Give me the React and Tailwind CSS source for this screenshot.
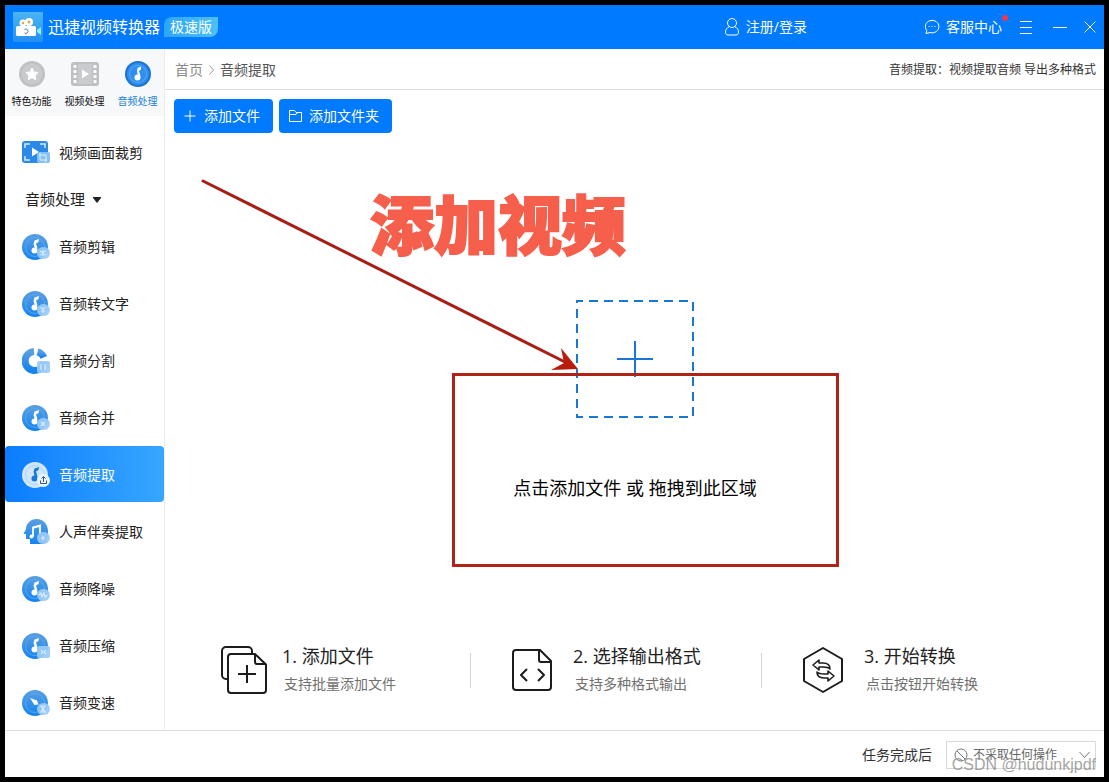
const TABS = [
  { id: 'special', label: '特色功能' },
  { id: 'video', label: '视频处理' },
  { id: 'audio', label: '音频处理' }
];

const AUDIO_TOOLS = [
  { id: 'cut', label: '音频剪辑' },
  { id: 'text', label: '音频转文字' },
  { id: 'split', label: '音频分割' },
  { id: 'merge', label: '音频合并' },
  { id: 'extract', label: '音频提取' },
  { id: 'vocal', label: '人声伴奏提取' },
  { id: 'denoise', label: '音频降噪' },
  { id: 'compress', label: '音频压缩' },
  { id: 'speed', label: '音频变速' }
];

const STEPS = [
  { id: 'add', title: '1. 添加文件', hint: '支持批量添加文件' },
  { id: 'format', title: '2. 选择输出格式', hint: '支持多种格式输出' },
  { id: 'convert', title: '3. 开始转换', hint: '点击按钮开始转换' }
];

// what sits inside the small badge of each tool icon, on a 28x28 grid
const BADGES = {
  cut: <path d="M18 18l6 4M18 22l6-4M21 17v6" />,
  text: <path d="M18 18h6M21 18v5M19 21h4" />,
  split: <path d="M19 17v6M23 17v6M18 20h1M23 20h1" />,
  merge: <path d="M19 18l4 4M23 18l-4 4" />,
  vocal: <path d="M19 20h4M21 18v4" />,
  denoise: <path d="M17 20l2-2 1 4 2-4 1 4 2-2" />,
  compress: <path d="M19 18l2 2-2 2M24 18l-2 2 2 2" />,
  speed: <path d="M19 17h4l-4 6h4z" />
};

function LogoIcon() {
  return (
    <svg width="30" height="30" viewBox="0 0 30 30" aria-hidden="true">
      <defs>
        <linearGradient id="logo" x1="0" y1="0" x2="0" y2="1">
          <stop offset="0" stopColor="#4bb5f5" />
          <stop offset="1" stopColor="#2490ef" />
        </linearGradient>
      </defs>
      <rect width="30" height="30" fill="url(#logo)" />
      <circle cx="10" cy="11" r="3.5" fill="#fff" />
      <circle cx="16" cy="10" r="4" fill="#fff" />
      <circle cx="10" cy="11" r="1.2" fill="#e0a83c" />
      <circle cx="16" cy="10" r="1.5" fill="#e0a83c" />
      <rect x="3" y="14" width="20" height="10" rx="1.5" fill="#fff" />
      <path d="M24 18l4-3v8l-4-3z" fill="#8ff0f5" />
      <path d="M11.500 17.500a2.200 2.200 0 1 1 0 3.500" fill="none" stroke="#3a7fc0" />
    </svg>
  );
}

function Note({ color }) {
  return (
    <g fill={color}>
      <circle cx="12.500" cy="17.500" r="3" />
      <path d="M13.500 17.500l-2-6.500 1-3.500 4.500-1.500-.5 3-2.500 1.500 1.500 5z" />
    </g>
  );
}

function TabIcon({ id }) {
  if (id === 'special') {
    return (
      <svg width="26" height="26" viewBox="0 0 26 26" aria-hidden="true">
        <circle cx="13" cy="13" r="13" fill="#bfc0c4" />
        <circle cx="13" cy="13" r="10.500" fill="#c9cacd" />
        <path
          d="M13 7l1.900 3.900 4.200.6-3.100 3 .8 4.200-3.800-2-3.800 2 .8-4.200-3.100-3 4.200-.6z"
          fill="#fff"
          stroke="#fff"
          strokeLinejoin="round"
        />
      </svg>
    );
  }
  if (id === 'video') {
    return (
      <svg width="28" height="26" viewBox="0 0 28 26" aria-hidden="true">
        <rect y="1" width="28" height="24" rx="3" fill="#bfc0c4" />
        <rect x="7" y="3" width="14" height="20" fill="#cacbce" />
        <g fill="#fff">
          <path d="M11 8.500v9l7-4.500z" />
          <rect x="2.500" y="4" width="3" height="3" rx=".5" />
          <rect x="2.500" y="9" width="3" height="3" rx=".5" />
          <rect x="2.500" y="14" width="3" height="3" rx=".5" />
          <rect x="2.500" y="19" width="3" height="3" rx=".5" />
          <rect x="22.500" y="4" width="3" height="3" rx=".5" />
          <rect x="22.500" y="9" width="3" height="3" rx=".5" />
          <rect x="22.500" y="14" width="3" height="3" rx=".5" />
          <rect x="22.500" y="19" width="3" height="3" rx=".5" />
        </g>
      </svg>
    );
  }
  return (
    <svg width="26" height="26" viewBox="0 0 26 26" aria-hidden="true">
      <circle cx="13" cy="13" r="13" fill="#1a73cf" />
      <circle cx="13" cy="13" r="11" fill="#2f8fef" />
      <circle cx="13" cy="13" r="8.500" fill="none" stroke="#57a8f5" />
      <g fill="#fff">
        <circle cx="12.500" cy="16.500" r="3" />
        <path d="M13.500 16.500l-1.500-6 .5-3.500 3.500-1.500v3l-2 1.500 1.500 5z" />
      </g>
    </svg>
  );
}

function ToolIcon({ id, active }) {
  const disc = active ? '#cfe6fc' : 'url(#disc)';
  const round = id !== 'compress' && id !== 'split';

  return (
    <svg className="shrink-0" width="28" height="28" viewBox="0 0 28 28" aria-hidden="true">
      <defs>
        <linearGradient id="disc" x1="0" y1="0" x2="0" y2="1">
          <stop offset="0" stopColor="#5a9fe0" />
          <stop offset="1" stopColor="#1583f0" />
        </linearGradient>
      </defs>
      {id === 'split' && (
        <g fill="none" stroke="url(#disc)" strokeWidth="7">
          <path d="M12 4.500a9.500 9.500 0 1 0 10 11" />
          <path d="M15.500 4.800a9.500 9.500 0 0 1 6.300 5.500" />
        </g>
      )}
      {id === 'vocal' && (
        <>
          <path
            d="M15 1C8 1 4 6 4 11l-2.500 5H4v5h4v5h14c4-4 4-9 4-13 0-7-5-12-11-12z"
            fill={disc}
          />
          <path
            d="M11 18.500V9.500l7-2v3M11 10l7-2M18 8v8"
            fill="none"
            stroke="#fff"
            strokeWidth="1.800"
          />
          <circle cx="9.500" cy="18.500" r="2" fill="#fff" />
        </>
      )}
      {id !== 'split' && id !== 'vocal' && (
        <>
          <circle cx="13" cy="14" r="13" fill={disc} />
          <circle
            cx="13"
            cy="14"
            r="9.500"
            fill="none"
            stroke={active ? '#a4d0f8' : '#5eacf4'}
            strokeWidth=".8"
          />
          {id === 'speed' ? (
            <path d="M8 9l7 2.500 1.500 4-4 .5z" fill="#fff" />
          ) : (
            <Note color={active ? '#1878d8' : '#fff'} />
          )}
        </>
      )}
      {active ? (
        <>
          <circle cx="21.500" cy="19.500" r="6.500" fill="#e8f4fe" />
          <path
            d="M21.500 21v-5M19.500 17.500l2-2 2 2M18.500 19.500v3h6v-3"
            fill="none"
            stroke="#3a566f"
          />
        </>
      ) : (
        <>
          <rect
            x="15"
            y="14"
            width="13"
            height="12"
            rx={round ? 6 : 2}
            fill="#9acbf7"
            fillOpacity=".92"
          />
          <g fill="none" stroke="#d8ecfd" strokeWidth="1.200">
            {BADGES[id]}
          </g>
        </>
      )}
    </svg>
  );
}

function CropIcon() {
  return (
    <svg className="shrink-0" width="28" height="24" viewBox="0 0 28 24" aria-hidden="true">
      <rect width="26" height="22" rx="3" fill="#2b89e8" />
      <path
        d="M3 7V3h5M18 3h5v4M3 15v4h5"
        fill="none"
        stroke="#d8ecfd"
        strokeWidth="1.500"
      />
      <path d="M10 6.500v9l7-4.500z" fill="#fff" />
      <rect x="15" y="11" width="13" height="11" rx="2" fill="#85c0f6" />
      <path d="M18 12v7h7M17 14h7v7" fill="none" stroke="#e0f0fe" />
    </svg>
  );
}

function StepIcon({ id }) {
  return (
    <svg
      className="shrink-0"
      width={id === 'add' ? 46 : 40}
      height="48"
      viewBox={id === 'add' ? '0 0 46 48' : '0 0 40 48'}
      fill="none"
      stroke="#1c1c1c"
      strokeWidth="2"
      strokeLinejoin="round"
      aria-hidden="true"
    >
      {id === 'add' && (
        <>
          <path d="M7 33H5a4 4 0 0 1-4-4V5a4 4 0 0 1 4-4h22a4 4 0 0 1 4 4v3" />
          <path d="M34 8H10a3 3 0 0 0-3 3v33a3 3 0 0 0 3 3h32a3 3 0 0 0 3-3V18.500z" />
          <path d="M34 8v8a2 2 0 0 0 2 2h9" />
          <path d="M26 19v18M17 28h18" />
        </>
      )}
      {id === 'format' && (
        <>
          <path d="M28 4H4a3 3 0 0 0-3 3v34a3 3 0 0 0 3 3h32a3 3 0 0 0 3-3V15z" />
          <path d="M27 4v10a2 2 0 0 0 2 2h10" />
          <path d="M15 23l-6 6 6 6M26 23l6 6-6 6" />
        </>
      )}
      {id === 'convert' && (
        <>
          <path d="M20 2l19 11v22L20 46 1 35V13z" />
          <path
            d="M10 19l6-5v3h4c4 0 7 2 7 6-2-2-4-2-7-2h-4v3zM31 30l-6 5v-3h-4c-4 0-7-2-7-6 2 2 4 2 7 2h4v-3z"
            strokeWidth="1.600"
          />
        </>
      )}
    </svg>
  );
}

function TitleBar() {
  return (
    <header className="flex h-11 shrink-0 items-center bg-[#007aff] px-2 text-sm text-white">
      <LogoIcon />
      <h1 className="ml-[5px] text-base">迅捷视频转换器</h1>
      <span className="ml-1 h-5 rounded-br-lg rounded-tl-lg bg-linear-to-r from-[#2ba6f8] to-[#4cc0f5] px-1.5 leading-5">
        极速版
      </span>

      <button type="button" className="ml-auto flex items-center gap-1.5">
        <svg width="16" height="20" viewBox="0 0 16 20" fill="none" stroke="currentColor" aria-hidden="true">
          <circle cx="8" cy="6" r="4.500" />
          <path d="M5.500 9.500C3 10.500 1.500 12.500 1.500 15c0 2 1 3 2.500 3h8c1.500 0 2.500-1 2.500-3 0-2.500-1.500-4.500-4-5.500" />
        </svg>
        注册/登录
      </button>
      <button type="button" className="relative ml-[117px] flex items-center gap-1.5">
        <svg width="16" height="16" viewBox="0 0 16 16" fill="none" stroke="currentColor" aria-hidden="true">
          <path d="M2 14.500l.8-3A6.800 6.300 0 1 1 6 13.600z" />
          <path d="M4.500 7.500h1M7.500 7.500h1M10.500 7.500h1" />
        </svg>
        客服中心
        <span className="absolute -right-1.5 -top-0.5 size-1.5 rounded-full bg-[#f0384a]" />
      </button>
      <button type="button" aria-label="菜单" className="ml-[18px]">
        <svg width="12" height="14" viewBox="0 0 12 14" stroke="currentColor" aria-hidden="true">
          <path d="M0 1.500h12M0 7.500h12M0 13.500h12" />
        </svg>
      </button>
      <button type="button" aria-label="最小化" className="ml-[21px]">
        <svg width="14" height="12" viewBox="0 0 14 12" stroke="currentColor" aria-hidden="true">
          <path d="M0 6.500h14" />
        </svg>
      </button>
      <button type="button" aria-label="关闭" className="ml-[17px]">
        <svg width="12" height="12" viewBox="0 0 12 12" stroke="currentColor" aria-hidden="true">
          <path d="M.5.500l11 11M11.500.500l-11 11" />
        </svg>
      </button>
    </header>
  );
}

function Sidebar() {
  return (
    <aside className="w-40 shrink-0 border-r border-[#ececec] bg-white">
      <nav className="flex h-[67px] bg-[#f7f8fa]">
        {TABS.map((t) => (
          <button
            key={t.id}
            type="button"
            className={
              'flex flex-1 flex-col items-center gap-1.5 pt-3 text-[10px] leading-4 ' +
              (t.id === 'audio' ? 'text-[#1b82d8]' : 'text-[#111]')
            }
          >
            <TabIcon id={t.id} />
            {t.label}
          </button>
        ))}
      </nav>

      <button
        type="button"
        className="mt-[9px] flex h-14 w-full items-center gap-[9px] pl-[17px] text-sm text-[#222]"
      >
        <CropIcon />
        视频画面裁剪
      </button>
      <button
        type="button"
        className="flex h-[37px] w-full items-center gap-2 pl-5 text-[15px] text-[#222]"
      >
        音频处理
        <svg width="8" height="6" viewBox="0 0 8 6" aria-hidden="true">
          <path d="M0 0h8v1L4 6 0 1z" fill="#222" />
        </svg>
      </button>

      <ul className="flex flex-col gap-px">
        {AUDIO_TOOLS.map((tool) => {
          const active = tool.id === 'extract';
          return (
            <li key={tool.id}>
              <button
                type="button"
                className={
                  'flex h-14 w-full items-center gap-[9px] rounded pl-[17px] pt-px text-sm ' +
                  (active
                    ? 'bg-linear-to-r from-[#0a7cff] to-[#36a6ff] text-white'
                    : 'text-[#222]')
                }
              >
                <ToolIcon id={tool.id} active={active} />
                {tool.label}
              </button>
            </li>
          );
        })}
      </ul>
    </aside>
  );
}

// red marks drawn over the drop area
function Annotations() {
  return (
    <div className="pointer-events-none absolute -top-[125px] left-1/2 -ml-[435px] h-[400px] w-[640px]">
      <svg className="absolute left-0 top-0" width="380" height="200" viewBox="0 0 380 200" aria-hidden="true">
        <path d="M3 6l364 182" stroke="#a81e12" strokeWidth="3" strokeLinecap="round" />
        <path d="M378 194l-27 1 13-7-3-15z" fill="#b81c0c" />
      </svg>
      <strong className="absolute left-[170px] top-4 whitespace-nowrap text-[64px] font-black leading-[68px] text-[#f55f4b] [-webkit-text-stroke:2px_#f55f4b]">
        添加视频
      </strong>
      <div className="absolute left-[252px] top-[198px] h-[194px] w-[387px] border-3 border-[#b02318]" />
    </div>
  );
}

function DropArea() {
  return (
    <div className="flex flex-1 flex-col items-center justify-center pl-px pt-[26px]">
      <div className="relative">
        <button type="button" className="flex flex-col items-center gap-14 text-lg leading-7 text-black">
          <svg
            width="118"
            height="118"
            viewBox="0 0 118 118"
            fill="none"
            stroke="#1976d2"
            strokeWidth="2"
            aria-hidden="true"
          >
            <path
              d="M1 1h116v116H1z"
              strokeDasharray="9 6"
              strokeDashoffset="3"
            />
            <path d="M59 41v36M41 59h36" />
          </svg>
          点击添加文件 或 拖拽到此区域
        </button>
        <Annotations />
      </div>
    </div>
  );
}

function Steps() {
  return (
    <ol className="flex justify-center pb-8 pl-1">
      {STEPS.map((s, i) => (
        <li key={s.id} className="flex items-center">
          {i > 0 && <span className="mr-[41px] h-[35px] w-px bg-[#d4d4d4]" />}
          <div
            className={
              'flex w-[249px] items-center ' + (s.id === 'add' ? 'gap-[15px]' : 'gap-[21px]')
            }
          >
            <StepIcon id={s.id} />
            <div>
              <h2 className="text-lg leading-7 text-[#222]">{s.title}</h2>
              <p className="pl-0.5 text-sm leading-7 text-[#707070]">{s.hint}</p>
            </div>
          </div>
        </li>
      ))}
    </ol>
  );
}

function Footer() {
  return (
    <footer className="relative flex h-[47px] shrink-0 items-center justify-end gap-3.5 border-t border-[#dcdcdc] bg-white pr-2 pt-0.5 text-sm text-[#333]">
      <label htmlFor="after">任务完成后</label>
      <div className="relative">
        <select
          id="after"
          className="h-7 w-[150px] appearance-none border border-[#d9d9d9] bg-white pl-[26px] text-xs text-[#666]"
        >
          <option>不采取任何操作</option>
        </select>
        <svg
          className="pointer-events-none absolute left-2 top-[7px]"
          width="14"
          height="14"
          viewBox="0 0 14 14"
          fill="none"
          stroke="#777"
          aria-hidden="true"
        >
          <circle cx="7" cy="7" r="6" />
          <path d="M3 3l8 8" />
        </svg>
        <svg
          className="pointer-events-none absolute right-1.5 top-2.5"
          width="11"
          height="8"
          viewBox="0 0 11 8"
          fill="none"
          stroke="#777"
          aria-hidden="true"
        >
          <path d="M.5 1l5 5.500 5-5.500" />
        </svg>
      </div>
      <span className="pointer-events-none absolute bottom-0.5 right-2 font-['Liberation_Sans',sans-serif] text-base leading-5 text-[#8c8c8c]/80">
        CSDN @hudunkjpdf
      </span>
    </footer>
  );
}

export default function App() {
  return (
    <div className="flex min-h-screen flex-col bg-black p-[5px] font-['Open_Sans','Noto_Sans_CJK_SC',sans-serif]">
      <TitleBar />
      <div className="flex flex-1 bg-white">
        <Sidebar />
        <main className="flex min-w-0 flex-1 flex-col">
          <div className="flex h-[41px] items-center justify-between border-b border-[#dedede] pl-2.5 pr-2 pt-0.5">
            <nav className="flex items-center gap-1.5 text-sm text-[#555]">
              <a href="#" className="text-[#8a8a8a]">
                首页
              </a>
              <svg width="5" height="10" viewBox="0 0 5 10" fill="none" stroke="#999" aria-hidden="true">
                <path d="M.5.500l4 4.500-4 4.500" />
              </svg>
              <span>音频提取</span>
            </nav>
            <p className="text-xs text-[#333]">音频提取：视频提取音频 导出多种格式</p>
          </div>

          <div className="flex gap-1.5 pl-[9px] pt-[9px] text-sm text-white">
            <button
              type="button"
              className="flex h-[34px] items-center gap-2 rounded bg-[#007aff] pl-2.5 pr-[13px]"
            >
              <svg width="12" height="12" viewBox="0 0 12 12" stroke="currentColor" aria-hidden="true">
                <path d="M6 .5v11M.5 6h11" />
              </svg>
              添加文件
            </button>
            <button
              type="button"
              className="flex h-[34px] items-center gap-[7px] rounded bg-[#007aff] pl-2.5 pr-[13px]"
            >
              <svg width="13" height="12" viewBox="0 0 13 12" fill="none" stroke="currentColor" aria-hidden="true">
                <path d="M.5 11.500v-11h5l1.500 2h5.500v9zM.5 4.500H7l1.500-2" />
              </svg>
              添加文件夹
            </button>
          </div>

          <DropArea />
          <Steps />
        </main>
      </div>
      <Footer />
    </div>
  );
}
